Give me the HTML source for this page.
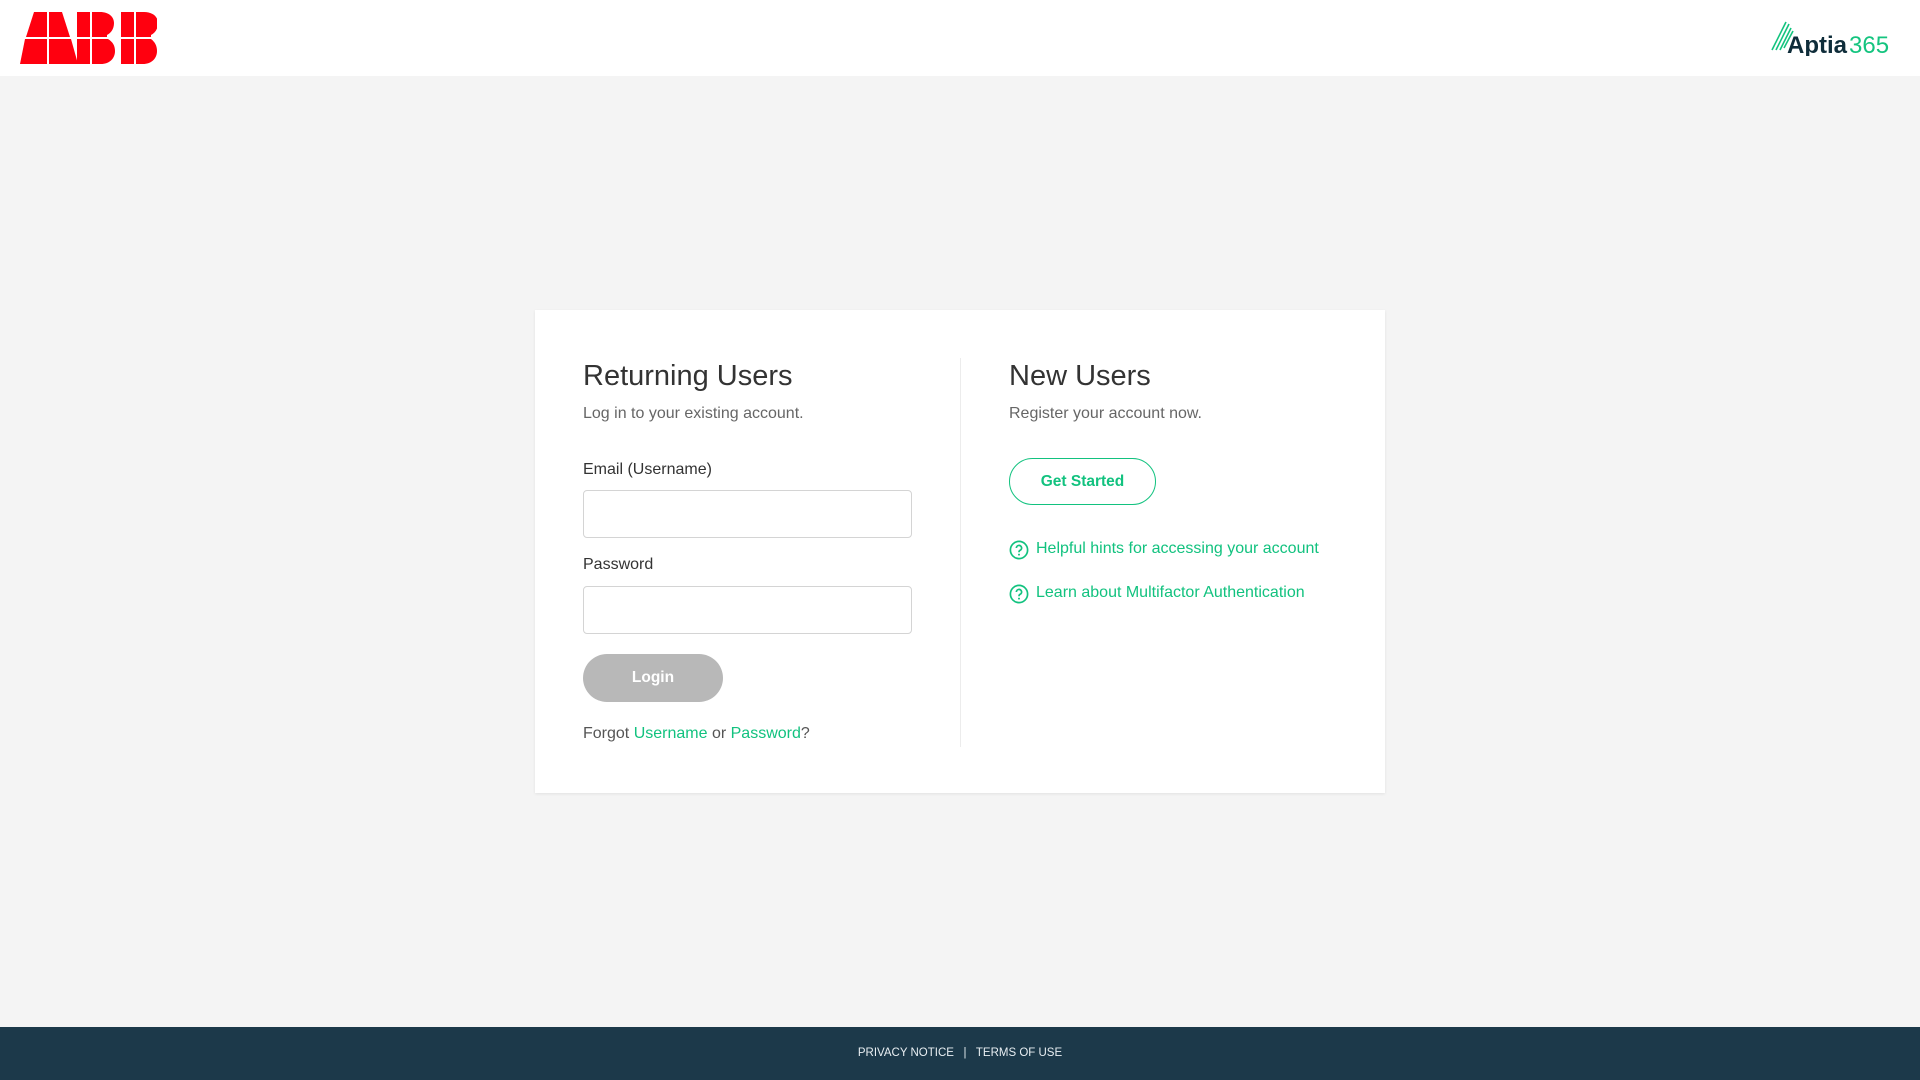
<!DOCTYPE html>
<html><head><meta charset="utf-8"><style>
*{box-sizing:border-box;margin:0;padding:0}
body{width:1920px;height:1080px;background:#f4f4f4;font-family:"Liberation Sans",Arial,sans-serif;position:relative;overflow:hidden;color:#333}
.hdr{position:absolute;left:0;top:0;width:1920px;height:76px;background:#fff}
.card{position:absolute;left:535px;top:310px;width:850px;height:483px;background:#fff;box-shadow:0 1px 3px rgba(0,0,0,.08)}
.a{position:absolute;white-space:nowrap}
h1{position:absolute;font-weight:400;font-size:29px;color:#333;white-space:nowrap}
.sub{font-size:16px;color:#666}
.lbl{font-size:16px;color:#333}
.inp{position:absolute;left:583px;width:329px;height:48px;border:1px solid #d4d4d4;border-radius:4px;background:#fff}
.g{color:#12c27f}
.ft{position:absolute;left:0;top:1027px;width:1920px;height:53px;background:#1c394a;color:#e8eef2;font-size:11.5px;text-align:center;line-height:53px}
</style></head><body>
<div class="hdr">
<svg style="position:absolute;left:20px;top:12px" width="137" height="52" viewBox="0 0 137 52">
<g fill="#ff000f">
<polygon points="14,0 27,0 27,25 6,25"/><polygon points="29,0 42,0 50,25 29,25"/>
<polygon points="5,27 27,27 27,52 0,52"/><polygon points="29,27 51,27 58,52 29,52"/>
<path d="M57,0h13v25h-13z M72,0h8c9,0 14,5 14,11c0,6-3,10-7,12v2h-15z"/>
<path d="M57,27h13v25h-13z M72,27h16c5,3 7,7 7,12c0,8-6,13-14,13h-9z"/>
<path d="M101,0h13v25h-13z M116,0h8c9,0 14,5 14,11c0,6-3,10-7,12v2h-15z"/>
<path d="M101,27h13v25h-13z M116,27h15c4,3 6,7 6,12c0,8-6,13-14,13h-7z"/>
</g></svg>
<svg style="position:absolute;left:1770px;top:20px" width="126" height="36" viewBox="0 0 126 36">
<g stroke="#14c47f" stroke-width="1.6"><line x1="2" y1="30" x2="16" y2="2"/><line x1="6" y1="30" x2="19" y2="4"/><line x1="10" y1="30" x2="21" y2="8"/><line x1="14" y1="28" x2="23" y2="11"/></g>
<text x="17" y="33" font-family="Liberation Sans,sans-serif" font-size="24" font-weight="700" fill="#0f2d3a">Aptia</text>
<text x="79" y="33" font-family="Liberation Sans,sans-serif" font-size="24" fill="#14c47f">365</text>
</svg>
</div>
<div class="card"></div>
<div class="a" style="left:960px;top:358px;width:1px;height:389px;background:#ececec"></div>
<h1 style="left:583px;top:360px">Returning Users</h1>
<div class="a sub" style="left:583px;top:405px">Log in to your existing account.</div>
<div class="a lbl" style="left:583px;top:461px">Email (Username)</div>
<div class="inp" style="top:490px"></div>
<div class="a lbl" style="left:583px;top:556px">Password</div>
<div class="inp" style="top:586px"></div>
<div class="a" style="left:583px;top:654px;width:140px;height:48px;border-radius:24px;background:#b8b8b8;color:#fff;font-weight:700;font-size:15.5px;text-align:center;line-height:48px">Login</div>
<div class="a sub" style="left:583px;top:725px;color:#555">Forgot <span class="g">Username</span> or <span class="g">Password</span>?</div>
<h1 style="left:1009px;top:360px">New Users</h1>
<div class="a sub" style="left:1009px;top:405px">Register your account now.</div>
<div class="a" style="left:1009px;top:458px;width:147px;height:47px;border-radius:24px;border:1.5px solid #12c27f;color:#12c27f;font-weight:700;font-size:15.5px;text-align:center;line-height:45px">Get Started</div>
<svg class="a" style="left:1009px;top:540px" width="20" height="20" viewBox="0 0 20 20"><circle cx="10" cy="10" r="8.6" fill="none" stroke="#12c27f" stroke-width="1.7"/><path d="M7.4,8a2.6,2.6 0 1 1 3.6,2.4c-.8.4-1,.9-1,1.8" fill="none" stroke="#12c27f" stroke-width="1.7"/><circle cx="10" cy="14.6" r="1" fill="#12c27f"/></svg>
<div class="a g" style="left:1036px;top:540px;font-size:16px">Helpful hints for accessing your account</div>
<svg class="a" style="left:1009px;top:584px" width="20" height="20" viewBox="0 0 20 20"><circle cx="10" cy="10" r="8.6" fill="none" stroke="#12c27f" stroke-width="1.7"/><path d="M7.4,8a2.6,2.6 0 1 1 3.6,2.4c-.8.4-1,.9-1,1.8" fill="none" stroke="#12c27f" stroke-width="1.7"/><circle cx="10" cy="14.6" r="1" fill="#12c27f"/></svg>
<div class="a g" style="left:1036px;top:584px;font-size:16px">Learn about Multifactor Authentication</div>
<div class="ft">PRIVACY NOTICE &nbsp;&nbsp;|&nbsp;&nbsp; TERMS OF USE</div>
</body></html>
